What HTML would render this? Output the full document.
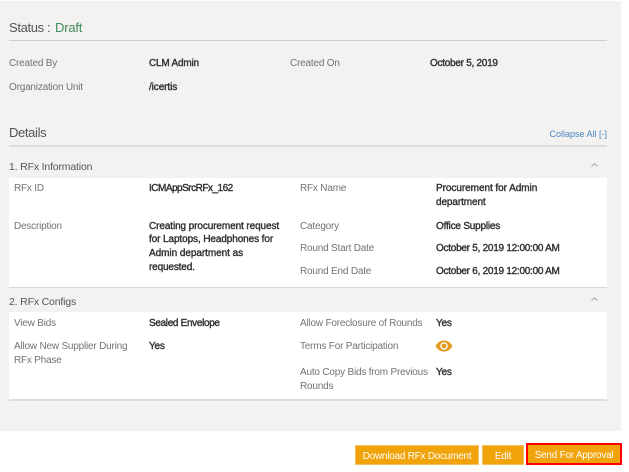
<!DOCTYPE html>
<html>
<head>
<meta charset="utf-8">
<style>
html,body{margin:0;padding:0;background:#fff;}
#p{position:relative;width:629px;height:472px;overflow:hidden;background:#fff;font-family:"Liberation Sans",sans-serif;font-size:10px;}
#p div{position:absolute;}
.t{white-space:nowrap;line-height:14px;height:14px;}
.l{color:#737373;letter-spacing:-0.2px;}
.b{color:#333;font-weight:normal;font-size:10px;-webkit-text-stroke:0.4px #333;letter-spacing:-0.1px;}
.h{color:#555;font-size:10.5px;letter-spacing:-0.17px;}
.btn{background:#f0a30a;color:#fff;text-align:center;line-height:21px;height:20px;border:1px solid #f5c164;box-sizing:border-box;letter-spacing:-0.25px;white-space:nowrap;}
</style>
</head>
<body>
<div id="p">
<div style="left:0;top:1px;width:621px;height:430px;background:#f3f2f1"></div>

<div class="t" style="left:9px;top:21px;font-size:13px;color:#555;letter-spacing:-0.35px">Status :</div>
<div class="t" style="left:55px;top:21px;font-size:13px;color:#3f8a5c;letter-spacing:-0.2px">Draft</div>
<div style="left:9px;top:40px;width:598px;height:1px;background:#cfcfcf"></div>

<div class="t l" style="left:9px;top:57px">Created By</div>
<div class="t b" style="left:149px;top:57px;letter-spacing:-0.2px">CLM Admin</div>
<div class="t l" style="left:290px;top:57px">Created On</div>
<div class="t b" style="left:430px;top:57px;letter-spacing:-0.27px">October 5, 2019</div>
<div class="t l" style="left:9px;top:81px">Organization Unit</div>
<div class="t b" style="left:149px;top:81px">/icertis</div>

<div class="t" style="left:9px;top:126px;font-size:13px;color:#555;letter-spacing:-0.35px">Details</div>
<div class="t" style="right:22px;top:127px;font-size:9px;color:#4a86c0">Collapse All [-]</div>
<div style="left:9px;top:145px;width:598px;height:2px;background:#dedddc"></div>

<div class="t h" style="left:9px;top:160px">1. RFx Information</div>
<svg style="position:absolute;left:590px;top:162px" width="9" height="6" viewBox="0 0 9 6"><path d="M1.500 4.500L4.500 1.800L7.500 4.500" fill="none" stroke="#aaa" stroke-width="1.100"/></svg>
<div style="left:9px;top:178px;width:598px;height:109px;background:#fff;border-bottom:1px solid #d9d9d9"></div>

<div class="t l" style="left:14px;top:182px">RFx ID</div>
<div class="t b" style="left:149px;top:182px;letter-spacing:-0.5px">ICMAppSrcRFx_162</div>
<div class="t l" style="left:300px;top:182px">RFx Name</div>
<div class="t b" style="left:436px;top:182px;letter-spacing:-0.05px">Procurement for Admin</div>
<div class="t b" style="left:436px;top:196px">department</div>
<div class="t l" style="left:14px;top:220px">Description</div>
<div class="t b" style="left:149px;top:220px">Creating procurement request</div>
<div class="t b" style="left:149px;top:233px">for Laptops, Headphones for</div>
<div class="t b" style="left:149px;top:247px;letter-spacing:-0.05px">Admin department as</div>
<div class="t b" style="left:149px;top:261px;letter-spacing:-0.15px">requested.</div>
<div class="t l" style="left:300px;top:220px">Category</div>
<div class="t b" style="left:436px;top:220px;letter-spacing:-0.2px">Office Supplies</div>
<div class="t l" style="left:300px;top:242px">Round Start Date</div>
<div class="t b" style="left:436px;top:242px;letter-spacing:-0.26px">October 5, 2019 12:00:00 AM</div>
<div class="t l" style="left:300px;top:265px">Round End Date</div>
<div class="t b" style="left:436px;top:265px;letter-spacing:-0.26px">October 6, 2019 12:00:00 AM</div>

<div class="t h" style="left:9px;top:295px">2. RFx Configs</div>
<svg style="position:absolute;left:590px;top:296px" width="9" height="6" viewBox="0 0 9 6"><path d="M1.500 4.500L4.500 1.800L7.500 4.500" fill="none" stroke="#aaa" stroke-width="1.100"/></svg>
<div style="left:9px;top:312px;width:598px;height:87px;background:#fff;border-bottom:2px solid #dedddc"></div>

<div class="t l" style="left:14px;top:317px">View Bids</div>
<div class="t b" style="left:149px;top:317px;letter-spacing:-0.33px">Sealed Envelope</div>
<div class="t l" style="left:300px;top:317px">Allow Foreclosure of Rounds</div>
<div class="t b" style="left:436px;top:317px;letter-spacing:-0.2px">Yes</div>
<div class="t l" style="left:14px;top:340px">Allow New Supplier During</div>
<div class="t l" style="left:14px;top:354px">RFx Phase</div>
<div class="t b" style="left:149px;top:340px;letter-spacing:-0.2px">Yes</div>
<div class="t l" style="left:300px;top:340px">Terms For Participation</div>
<svg style="position:absolute;left:435px;top:339px" width="18" height="14" viewBox="0 0 18 14"><path fill-rule="evenodd" d="M0.500 7C2.500 3.400 5.500 1.500 9 1.500S15.500 3.400 17.500 7C15.500 10.600 12.500 12.500 9 12.500S2.500 10.600 0.500 7ZM9 3.200A3.800 3.800 0 1 0 9 10.800A3.800 3.800 0 1 0 9 3.200Z" fill="#e39a1f"/><circle cx="9" cy="7" r="2.400" fill="#e39a1f"/></svg>
<div class="t l" style="left:300px;top:366px">Auto Copy Bids from Previous</div>
<div class="t l" style="left:300px;top:380px">Rounds</div>
<div class="t b" style="left:436px;top:366px;letter-spacing:-0.2px">Yes</div>

<div class="btn" style="left:355px;top:445px;width:124px">Download RFx Document</div>
<div class="btn" style="left:482px;top:445px;width:42px">Edit</div>
<div class="btn" style="left:526px;top:443px;width:96px;height:22px;border:2px solid #f00;line-height:21px">Send For Approval</div>
</div>
</body>
</html>
